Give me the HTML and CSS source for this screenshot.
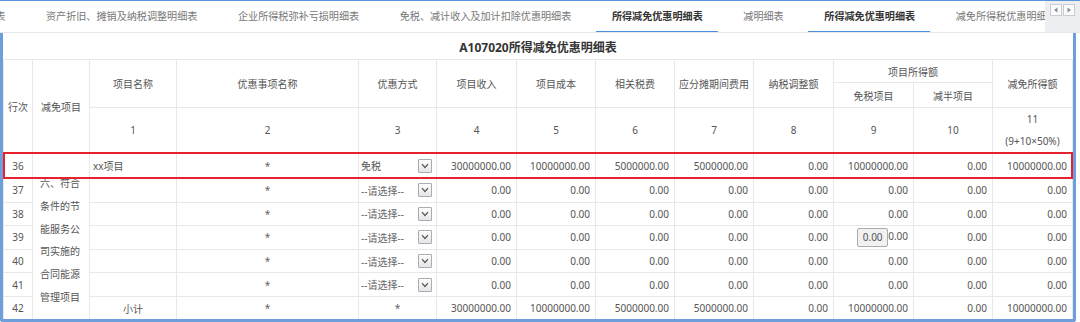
FILE: index.html
```html
<!DOCTYPE html>
<html lang="zh-CN">
<head>
  <meta charset="UTF-8">
  <title>A107020所得减免优惠明细表</title>
  <link rel="stylesheet" href="styles.css">
</head>
<body>
  <div class="tabbar">
    <div class="tabs">
      <div class="tab first">表</div>
      <div class="tab">资产折旧、摊销及纳税调整明细表</div>
      <div class="tab">企业所得税弥补亏损明细表</div>
      <div class="tab">免税、减计收入及加计扣除优惠明细表</div>
      <div class="tab active">所得减免优惠明细表</div>
      <div class="tab">减明细表</div>
      <div class="tab active">所得减免优惠明细表</div>
      <div class="tab">减免所得税优惠明细表</div>
    </div>
    <div class="tabnav">
      <span class="navbtn"><svg width="6" height="6" viewBox="0 0 6 6"><polygon points="4.5,0.5 4.5,5.5 1,3" fill="#8a8f96"/></svg></span>
      <span class="navbtn"><svg width="6" height="6" viewBox="0 0 6 6"><polygon points="1.5,0.5 1.5,5.5 5,3" fill="#8a8f96"/></svg></span>
    </div>
  </div>

  <div class="panel">
    <div class="title">A107020所得减免优惠明细表</div>

    <div class="grid">
      <table>
        <colgroup>
          <col style="width:29px">
          <col style="width:57px">
          <col style="width:87px">
          <col style="width:182px">
          <col style="width:78px">
          <col style="width:80px">
          <col style="width:79px">
          <col style="width:79px">
          <col style="width:79px">
          <col style="width:80px">
          <col style="width:80px">
          <col style="width:79px">
          <col style="width:80px">
        </colgroup>
        <thead>
          <tr class="h1">
            <th rowspan="3">行次</th>
            <th rowspan="3">减免项目</th>
            <th rowspan="2">项目名称</th>
            <th rowspan="2">优惠事项名称</th>
            <th rowspan="2">优惠方式</th>
            <th rowspan="2">项目收入</th>
            <th rowspan="2">项目成本</th>
            <th rowspan="2">相关税费</th>
            <th rowspan="2">应分摊期间费用</th>
            <th rowspan="2">纳税调整额</th>
            <th colspan="2">项目所得额</th>
            <th rowspan="2">减免所得额</th>
          </tr>
          <tr class="h2">
            <th>免税项目</th>
            <th>减半项目</th>
          </tr>
          <tr class="h3">
            <th>1</th>
            <th>2</th>
            <th>3</th>
            <th>4</th>
            <th>5</th>
            <th>6</th>
            <th>7</th>
            <th>8</th>
            <th>9</th>
            <th>10</th>
            <th class="two">11<br>(9+10×50%)</th>
          </tr>
        </thead>
        <tbody>
          <tr class="sel">
            <td class="no">36</td>
            <td rowspan="7" class="group">六、符合条件的节能服务公司实施的合同能源管理项目</td>
            <td class="name">xx项目</td>
            <td class="star">*</td>
            <td class="pick"><div class="dropdown"><span>免税</span><span class="dd"><svg width="8" height="6" viewBox="0 0 8 6"><polyline points="1,1.2 4,4.5 7,1.2" fill="none" stroke="#555" stroke-width="1.2"/></svg></span></div></td>
            <td class="num">30000000.00</td>
            <td class="num">10000000.00</td>
            <td class="num">5000000.00</td>
            <td class="num">5000000.00</td>
            <td class="num">0.00</td>
            <td class="num">10000000.00</td>
            <td class="num">0.00</td>
            <td class="num">10000000.00</td>
          </tr>
          <tr>
            <td class="no">37</td>
            <td class="name"></td>
            <td class="star">*</td>
            <td class="pick"><div class="dropdown"><span class="ph">--请选择--</span><span class="dd"><svg width="8" height="6" viewBox="0 0 8 6"><polyline points="1,1.2 4,4.5 7,1.2" fill="none" stroke="#555" stroke-width="1.2"/></svg></span></div></td>
            <td class="num">0.00</td>
            <td class="num">0.00</td>
            <td class="num">0.00</td>
            <td class="num">0.00</td>
            <td class="num">0.00</td>
            <td class="num">0.00</td>
            <td class="num">0.00</td>
            <td class="num">0.00</td>
          </tr>
          <tr>
            <td class="no">38</td>
            <td class="name"></td>
            <td class="star">*</td>
            <td class="pick"><div class="dropdown"><span class="ph">--请选择--</span><span class="dd"><svg width="8" height="6" viewBox="0 0 8 6"><polyline points="1,1.2 4,4.5 7,1.2" fill="none" stroke="#555" stroke-width="1.2"/></svg></span></div></td>
            <td class="num">0.00</td>
            <td class="num">0.00</td>
            <td class="num">0.00</td>
            <td class="num">0.00</td>
            <td class="num">0.00</td>
            <td class="num">0.00</td>
            <td class="num">0.00</td>
            <td class="num">0.00</td>
          </tr>
          <tr>
            <td class="no">39</td>
            <td class="name"></td>
            <td class="star">*</td>
            <td class="pick"><div class="dropdown"><span class="ph">--请选择--</span><span class="dd"><svg width="8" height="6" viewBox="0 0 8 6"><polyline points="1,1.2 4,4.5 7,1.2" fill="none" stroke="#555" stroke-width="1.2"/></svg></span></div></td>
            <td class="num">0.00</td>
            <td class="num">0.00</td>
            <td class="num">0.00</td>
            <td class="num">0.00</td>
            <td class="num">0.00</td>
            <td class="num"><span class="box">0.00</span>0.00</td>
            <td class="num">0.00</td>
            <td class="num">0.00</td>
          </tr>
          <tr>
            <td class="no">40</td>
            <td class="name"></td>
            <td class="star">*</td>
            <td class="pick"><div class="dropdown"><span class="ph">--请选择--</span><span class="dd"><svg width="8" height="6" viewBox="0 0 8 6"><polyline points="1,1.2 4,4.5 7,1.2" fill="none" stroke="#555" stroke-width="1.2"/></svg></span></div></td>
            <td class="num">0.00</td>
            <td class="num">0.00</td>
            <td class="num">0.00</td>
            <td class="num">0.00</td>
            <td class="num">0.00</td>
            <td class="num">0.00</td>
            <td class="num">0.00</td>
            <td class="num">0.00</td>
          </tr>
          <tr>
            <td class="no">41</td>
            <td class="name"></td>
            <td class="star">*</td>
            <td class="pick"><div class="dropdown"><span class="ph">--请选择--</span><span class="dd"><svg width="8" height="6" viewBox="0 0 8 6"><polyline points="1,1.2 4,4.5 7,1.2" fill="none" stroke="#555" stroke-width="1.2"/></svg></span></div></td>
            <td class="num">0.00</td>
            <td class="num">0.00</td>
            <td class="num">0.00</td>
            <td class="num">0.00</td>
            <td class="num">0.00</td>
            <td class="num">0.00</td>
            <td class="num">0.00</td>
            <td class="num">0.00</td>
          </tr>
          <tr>
            <td class="no">42</td>
            <td class="name center">小计</td>
            <td class="star">*</td>
            <td class="star">*</td>
            <td class="num">30000000.00</td>
            <td class="num">10000000.00</td>
            <td class="num">5000000.00</td>
            <td class="num">5000000.00</td>
            <td class="num">0.00</td>
            <td class="num">10000000.00</td>
            <td class="num">0.00</td>
            <td class="num">10000000.00</td>
          </tr>
        </tbody>
      </table>
      <div class="highlight"></div>
    </div>
  </div>
</body>
</html>
```

FILE: styles.css
```css
* {
  box-sizing: border-box;
}
body {
  margin: 0;
  width: 1080px;
  height: 322px;
  overflow: hidden;
  background: #fff;
  font-family: "Noto Sans", "Noto Sans CJK SC", sans-serif;
  font-size: 10px;
  color: #555;
}

/* tab strip */
.tabbar {
  display: flex;
  height: 33px;
  border-top: 1px solid #5b93d9;
  border-bottom: 1px solid #e6e8eb;
}
.tabs {
  flex: 1;
  display: flex;
  overflow: hidden;
}
.tab {
  flex: none;
  position: relative;
  padding: 0 20.3px;
  line-height: 31px;
  font-size: 10.1px;
  color: #777;
  white-space: nowrap;
}
.tab.first {
  margin-left: -25px;
}
.tab.active {
  color: #333;
  font-weight: bold;
}
.tab.active::after {
  content: "";
  position: absolute;
  left: 4px;
  right: 5px;
  bottom: -1px;
  height: 2px;
  background: #4a8fe0;
}
.tabnav {
  width: 35px;
  display: flex;
  align-items: flex-start;
  gap: 1px;
  padding: 3px 0 0 5px;
  background: #eceef1;
}
.navbtn {
  width: 12px;
  height: 12px;
  display: flex;
  align-items: center;
  justify-content: center;
  border: 1px solid #c9cdd3;
  background: #fbfbfb;
}

/* panel */
.panel {
  width: 1076px;
  height: 289px;
  border-left: 3px solid #6d9fdd;
  border-right: 3px solid #6d9fdd;
  border-bottom: 3px solid #6d9fdd;
  border-radius: 0 0 3px 3px;
  overflow: hidden;
}
.title {
  height: 26px;
  padding-top: 3px;
  line-height: 23px;
  text-align: center;
  font-size: 12px;
  font-weight: bold;
  color: #333;
}
.grid {
  position: relative;
}
table {
  width: 1069px;
  table-layout: fixed;
  border-collapse: collapse;
}
th, td {
  border: 1px solid #e8e8e8;
  padding: 0;
  font-weight: normal;
  white-space: nowrap;
  overflow: hidden;
}
th {
  text-align: center;
  vertical-align: middle;
}
tr.h1 {
  height: 23px;
}
tr.h2 {
  height: 25px;
}
tr.h3 {
  height: 45px;
}
th.two {
  line-height: 22px;
}
tbody tr {
  height: 23.6px;
}
tbody tr.sel {
  height: 26px;
}
td.no {
  text-align: center;
}
td.group {
  vertical-align: top;
  white-space: normal;
  padding: 19px 7px 0;
  line-height: 22.8px;
}
td.name {
  padding-left: 3px;
}
td.center {
  text-align: center;
  padding-left: 0;
}
td.star {
  text-align: center;
  color: #666;
}
td.num {
  text-align: right;
  padding-right: 5px;
}
td.pick {
  padding: 0 4px 0 2px;
}
.dropdown {
  display: flex;
  align-items: center;
  justify-content: space-between;
}
.ph {
  color: #666;
}
.dd {
  width: 14px;
  height: 14px;
  display: flex;
  align-items: center;
  justify-content: center;
  border: 1px solid #a9acb0;
  border-radius: 1px;
  background: linear-gradient(#ffffff, #e4e5e7);
}
.box {
  display: inline-block;
  width: 31px;
  height: 19px;
  line-height: 17px;
  text-align: center;
  vertical-align: middle;
  border: 1px solid #a9acb0;
  border-radius: 2px;
  background: #f1f1f1;
}

/* selected row marker */
.highlight {
  position: absolute;
  top: 93px;
  left: 0;
  width: 1070px;
  height: 27px;
  border: 2px solid #e5222e;
  pointer-events: none;
}
```
